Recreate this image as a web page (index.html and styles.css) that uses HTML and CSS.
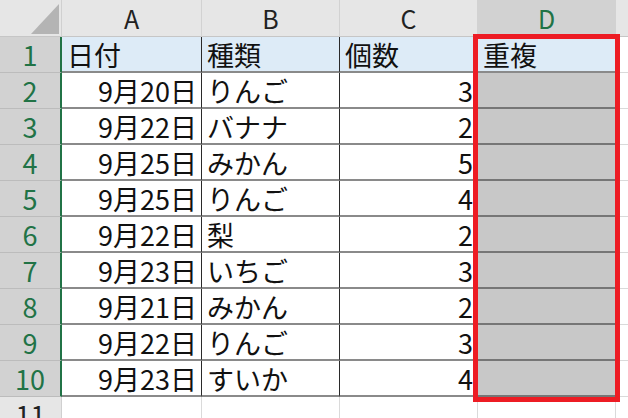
FILE: index.html
```html
<!DOCTYPE html>
<html lang="ja">
<head>
<meta charset="utf-8">
<link rel="stylesheet" href="styles.css">
</head>
<body>
<div class="sheet">
  <div class="corner"><div class="tri"></div></div>
  <div class="colh">A</div>
  <div class="colh">B</div>
  <div class="colh">C</div>
  <div class="colh sel">D</div>
  <div class="colh rest"></div>

  <div class="rh sel">1</div>
  <div class="c hdr">日付</div><div class="c hdr">種類</div><div class="c hdr">個数</div><div class="c hdr dfirst">重複</div><div class="c out"></div>

  <div class="rh sel">2</div>
  <div class="c num">9月20日</div><div class="c">りんご</div><div class="c num">3</div><div class="c dcol"></div><div class="c out"></div>

  <div class="rh sel">3</div>
  <div class="c num">9月22日</div><div class="c">バナナ</div><div class="c num">2</div><div class="c dcol"></div><div class="c out"></div>

  <div class="rh sel">4</div>
  <div class="c num">9月25日</div><div class="c">みかん</div><div class="c num">5</div><div class="c dcol"></div><div class="c out"></div>

  <div class="rh sel">5</div>
  <div class="c num">9月25日</div><div class="c">りんご</div><div class="c num">4</div><div class="c dcol"></div><div class="c out"></div>

  <div class="rh sel">6</div>
  <div class="c num">9月22日</div><div class="c">梨</div><div class="c num">2</div><div class="c dcol"></div><div class="c out"></div>

  <div class="rh sel">7</div>
  <div class="c num">9月23日</div><div class="c">いちご</div><div class="c num">3</div><div class="c dcol"></div><div class="c out"></div>

  <div class="rh sel">8</div>
  <div class="c num">9月21日</div><div class="c">みかん</div><div class="c num">2</div><div class="c dcol"></div><div class="c out"></div>

  <div class="rh sel">9</div>
  <div class="c num">9月22日</div><div class="c">りんご</div><div class="c num">3</div><div class="c dcol"></div><div class="c out"></div>

  <div class="rh sel">10</div>
  <div class="c num">9月23日</div><div class="c">すいか</div><div class="c num">4</div><div class="c dcol"></div><div class="c out"></div>

  <div class="rh">11</div>
  <div class="c empty"></div><div class="c empty"></div><div class="c empty"></div><div class="c empty"></div><div class="c empty last"></div>

  <div class="selbox"></div>
</div>
</body>
</html>
```

FILE: styles.css
```css
* { box-sizing: border-box; }
html, body { margin: 0; padding: 0; background: #ffffff; }
body { width: 628px; height: 418px; overflow: hidden; }

.sheet {
  position: relative;
  display: grid;
  grid-template-columns: 62px 140px 138px 138px 138px 12px;
  grid-template-rows: 37px repeat(10, 36px) 21px;
  font-family: "Noto Sans CJK JP", "Noto Sans", sans-serif;
  font-size: 25px;
  color: #111;
}

.corner {
  background: #e6e6e6;
  border-right: 1px solid #d0d0d0;
  border-bottom: 1px solid #c6c6c6;
  position: relative;
}
.tri {
  position: absolute;
  right: 2px;
  bottom: 2px;
  width: 0;
  height: 0;
  border-left: 28px solid transparent;
  border-bottom: 30px solid #b4b4b4;
}

.colh {
  background: #e6e6e6;
  border-right: 1px solid #d2d2d2;
  border-bottom: 1px solid #c6c6c6;
  text-align: center;
  line-height: 37px;
  color: #222;
}
.colh.sel { background: #d2d2d2; color: #217346; border-bottom: 2px solid #217346; }
.colh.rest { border-right: none; }

.rh {
  background: #e6e6e6;
  border-right: 1px solid #d0d0d0;
  text-align: center;
  line-height: 36px;
  color: #222;
  font-size: 27px;
}
.rh.sel {
  background: #d2d2d2;
  color: #217346;
  border-right: 2px solid #217346;
  border-bottom: 1px solid #bcbcbc;
}

.c {
  border-right: 1px solid #2a2a2a;
  border-bottom: 2px solid #8a8a8a;
  padding: 0 5px;
  line-height: 35px;
  font-size: 27px;
  white-space: nowrap;
}
.c.hdr { background: #ddebf7; }
.c.num { text-align: right; padding-right: 4px; }
.c.dcol { background: #c8c8c8; border-right: 1px solid #d8d8d8; border-bottom-color: #767676; }
.c.dfirst { border-right: 1px solid #d8d8d8; }
.c.out { border-right: none; border-bottom: 1px solid #dadada; }
.c.empty { border-right: 1px solid #dadada; border-bottom: none; }
.c.empty.last { border-right: none; }

.selbox {
  position: absolute;
  left: 473px;
  top: 34px;
  width: 147px;
  height: 368px;
  border: 5px solid #ed1c24;
  pointer-events: none;
}
```
